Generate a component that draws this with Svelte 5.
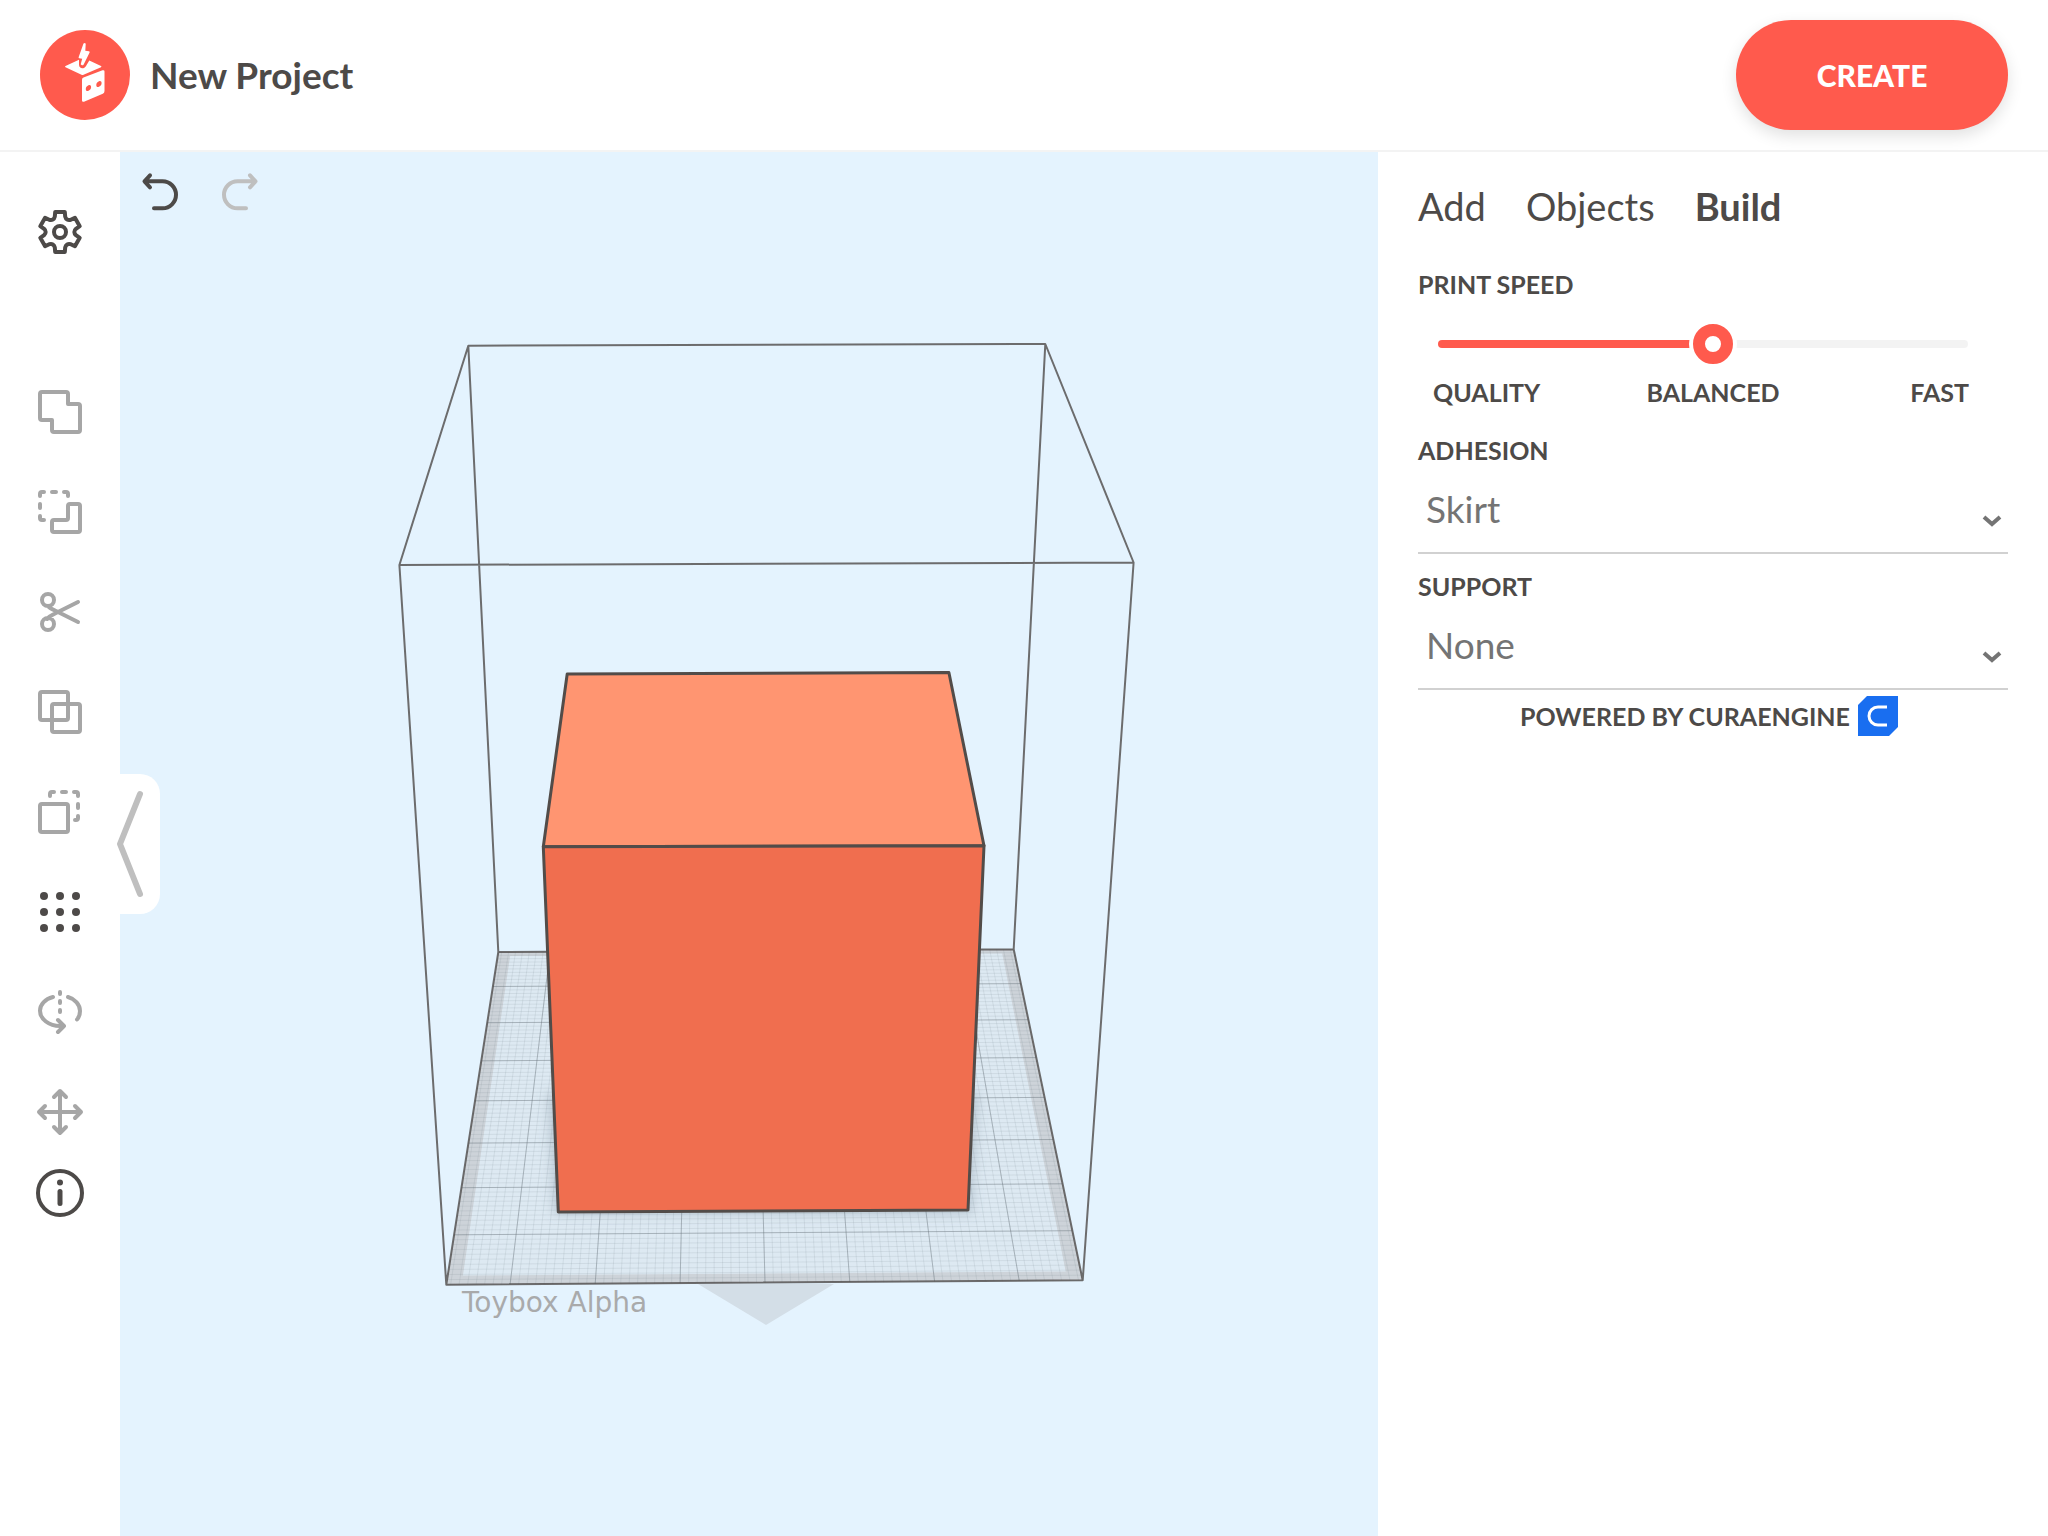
<script>
  let speed = $state(52);
  let adhesion = $state('Skirt');
  let support = $state('None');
  let project = $state('New Project');

  const tools = [
    { name: 'Union', d: 'M6 4H30a2 2 0 0 1 2 2V16H42a2 2 0 0 1 2 2V42a2 2 0 0 1-2 2H18a2 2 0 0 1-2-2V32H6a2 2 0 0 1-2-2V6a2 2 0 0 1 2-2Z' },
    { name: 'Subtract', d: 'M34 16h8a2 2 0 0 1 2 2v24a2 2 0 0 1-2 2H18a2 2 0 0 1-2-2v-8a2 2 0 0 1 2-2h12a2 2 0 0 0 2-2V18a2 2 0 0 1 2-2ZM4 8V6a2 2 0 0 1 2-2h2M16 4h4M28 4h2a2 2 0 0 1 2 2v2M4 16v4M4 28v2a2 2 0 0 0 2 2h2' },
    { name: 'Cut', d: 'M42 14 20 25q-8 4-9 6M42 34 20 23q-7-3-8-5M18 12a6 6 0 1 0-12 0a6 6 0 1 0 12 0M18 36a6 6 0 1 0-12 0a6 6 0 1 0 12 0' },
    { name: 'Intersect', d: 'M6 4h24a2 2 0 0 1 2 2v24a2 2 0 0 1-2 2H6a2 2 0 0 1-2-2V6a2 2 0 0 1 2-2ZM18 16h24a2 2 0 0 1 2 2v24a2 2 0 0 1-2 2H18a2 2 0 0 1-2-2V18a2 2 0 0 1 2-2Z' },
    { name: 'Duplicate', d: 'M6 16h24a2 2 0 0 1 2 2v24a2 2 0 0 1-2 2H6a2 2 0 0 1-2-2V18a2 2 0 0 1 2-2ZM14 8V6a2 2 0 0 1 2-2h2M26 4h4M38 4h2a2 2 0 0 1 2 2v2M42 16v4M42 28v2a2 2 0 0 1-2 2h-1' },
    { name: 'Grid', dots: true },
    { name: 'Mirror', d: 'M24 4v2M24 13v2M24 22v2M17 9C9 11 4 16.500 4 22.700C4 31 13 38 24 38h4M22 32l6 6-6 6M32 9c7 2 12 7.500 12 14q0 5-3 8.500' },
    { name: 'Move', d: 'M24 3v42M3 24h42M18 9l6-6 6 6M18 39l6 6 6-6M9 18l-6 6 6 6M39 18l6 6-6 6' }
  ];
  const dots = [8, 24, 40];

  // Gear outline: one tooth repeated every sixty degrees.
  const gear = Array.from({ length: 6 }, (_, i) => {
    const a = (i * Math.PI) / 3;
    const at = (x, y) =>
      `${(24 + x * Math.cos(a) - y * Math.sin(a)).toFixed(2)} ${(24 + x * Math.sin(a) + y * Math.cos(a)).toFixed(2)}`;
    return `${i ? 'L' : 'M'}${at(-5.2, -15.4)}L${at(-4.8, -20)}L${at(4.8, -20)}L${at(5.2, -15.4)}C${at(5.8, -12.6)} ${at(8, -11.3)} ${at(10.74, -12.2)}`;
  }).join('') + 'Z';

  // Build plate corners: back left, back right, front right, front left.
  const plate = [[378.3, 800], [893.7, 797.3], [962.7, 1128.3], [326.3, 1132.7]];

  function projector([p0, p1, p2, p3]) {
    const dx1 = p1[0] - p2[0], dx2 = p3[0] - p2[0], dx3 = p0[0] - p1[0] + p2[0] - p3[0];
    const dy1 = p1[1] - p2[1], dy2 = p3[1] - p2[1], dy3 = p0[1] - p1[1] + p2[1] - p3[1];
    const det = dx1 * dy2 - dx2 * dy1;
    const g = (dx3 * dy2 - dx2 * dy3) / det;
    const h = (dx1 * dy3 - dx3 * dy1) / det;
    const a = p1[0] - p0[0] + g * p1[0], b = p3[0] - p0[0] + h * p3[0];
    const d = p1[1] - p0[1] + g * p1[1], e = p3[1] - p0[1] + h * p3[1];
    return (u, v) => {
      const w = g * u + h * v + 1;
      return `${((a * u + b * v + p0[0]) / w).toFixed(1)} ${((d * u + e * v + p0[1]) / w).toFixed(1)}`;
    };
  }

  const at = projector(plate);
  const line = (u1, v1, u2, v2) => `M${at(u1, v1)}L${at(u2, v2)}`;
  const columns = 7.5;
  const rows = 8;
  let minor = '';
  let major = '';
  for (let i = 0; i <= 74; i++) {
    const u = (i + 0.5) / (columns * 10);
    minor += line(u, 0, u, 1);
  }
  for (let i = 1; i < 80; i++) minor += line(0, i / 80, 1, i / 80);
  for (let i = 0; i < 7; i++) {
    const u = (i + 0.75) / columns;
    major += line(u, 0, u, 1);
  }
  for (let i = 1; i < rows; i++) major += line(0, i / rows, 1, i / rows);
  const outer = `M${at(0, 0)}L${at(1, 0)}L${at(1, 1)}L${at(0, 1)}Z`;
  const inner = `M${at(0.024, 0.015)}L${at(0.976, 0.015)}L${at(0.976, 0.978)}L${at(0.024, 0.978)}Z`;
</script>

<div class="app">
  <header>
    <a class="logo" href="#home" aria-label="Toybox home">
      <svg viewBox="0 0 90 90">
        <circle cx="45" cy="45" r="45" fill="#ff5a4d" />
        <path fill="#fff" d="M25.500 36 39 29.700V34.500c0 4.500 5 5 7 1.500L49.300 30.500 61 36q1 .8 0 1.300L43.500 44.700q-1 .4-2 0L25.500 37.300q-1-.7 0-1.300Z" />
        <path fill="#fff" d="M43.500 13.500q1.800-1.400 2.200.5l-.4 6.800 3.700.4q1 .3.600 1.400L43.700 34.500q-1.500 1.800-3-.2L42.200 28.700 39.200 28.300q-.9-.3-.5-1.400Z" />
        <path fill="#fff" fill-rule="evenodd" d="M43.500 47.500 62.500 40.300q2-.6 2 1.300V61q0 2-1.700 2.800L44 71.700q-2 .6-2-1.300V49.700q0-1.600 1.500-2.200ZM48.500 55.200c-1.700.7-2.700 2-2.700 3.800s1 2.400 2.700 1.800 2.600-2 2.600-3.700-1-2.500-2.600-1.900ZM59 51.200c-1.700.7-2.700 2-2.700 3.800s1 2.400 2.700 1.800 2.600-2 2.600-3.700-1-2.500-2.600-1.900Z" />
      </svg>
    </a>
    <h1>{project}</h1>
    <button class="create">CREATE</button>
  </header>

  <main>
    <nav class="tools" aria-label="Tools">
      <button class="tool dark settings" aria-label="Settings">
        <svg viewBox="0 0 48 48"><path d={gear} /><circle cx="24" cy="24" r="6" /></svg>
      </button>
      {#each tools as tool}
        <button class="tool" class:dark={tool.dots} aria-label={tool.name}>
          <svg viewBox="0 0 48 48">
            {#if tool.dots}
              {#each dots as y}
                {#each dots as x}
                  <circle class="solid" cx={x} cy={y} r="4" />
                {/each}
              {/each}
            {:else}
              <path d={tool.d} />
            {/if}
          </svg>
        </button>
      {/each}
      <button class="tool dark info" aria-label="Info">
        <svg viewBox="0 0 48 48">
          <circle cx="24" cy="24" r="22" />
          <circle class="solid" cx="24" cy="13.500" r="3" />
          <path class="stem" d="M24 22.500v12" />
        </svg>
      </button>
    </nav>

    <section class="stage" aria-label="Workspace">
      <svg class="scene" viewBox="0 0 1258 1384">
        <defs>
          <filter id="soft" x="-20%" y="-20%" width="140%" height="140%"><feGaussianBlur stdDeviation="6" /></filter>
          <clipPath id="plate"><path d={outer} /></clipPath>
        </defs>
        <path d="M578 1132h136L646 1173Z" fill="#d3dee7" />
        <path d={outer} fill="#cdd3d9" />
        <path d={inner} fill="#dde9f2" />
        <path d={minor} stroke="#6b7b84" stroke-opacity=".13" fill="none" />
        <path d={major} stroke="#6b757c" stroke-opacity=".4" fill="none" />
        <g clip-path="url(#plate)">
          <path d="M428 940H858L852 1062H434Z" fill="#6f8290" fill-opacity=".32" filter="url(#soft)" />
        </g>
        <path class="frame" d="M348.300 193.700 925.300 192 1013.600 410.500 279.400 413ZM348.300 193.700 378.300 800 893.700 797.300 925.300 192M279.400 413 326.300 1132.700 962.700 1128.300 1013.600 410.500M378.300 800 326.300 1132.700M893.700 797.300 962.700 1128.300" />
        <path class="edge" d="M447.200 522 828.900 520.500 864 693.700 423.300 694.800Z" fill="#ff9571" />
        <path class="edge" d="M423.300 694.800 864 693.700 848 1058 438.300 1060Z" fill="#f06e4f" />
        <text x="342" y="1160">Toybox Alpha</text>
      </svg>

      <div class="history">
        <button class="tool dark" aria-label="Undo">
          <svg viewBox="0 0 48 48"><path d="M14 7.300 8.500 13.300l5.500 6M8.500 13.300H26.500a13.500 13.500 0 0 1 0 27H18" /></svg>
        </button>
        <button class="tool faint" aria-label="Redo">
          <svg viewBox="0 0 48 48"><path d="M34 7.300l5.500 6-5.500 6M39.500 13.300H21.500a13.500 13.500 0 0 0 0 27H30" /></svg>
        </button>
      </div>

      <button class="collapse" aria-label="Collapse tools">
        <svg viewBox="0 0 40 140"><path d="M20 20 0 70 20 120" /></svg>
      </button>
    </section>

    <aside>
      <div class="tabs" role="tablist">
        <button role="tab" aria-selected="false">Add</button>
        <button role="tab" aria-selected="false">Objects</button>
        <button role="tab" aria-selected="true">Build</button>
      </div>

      <label class="caption" for="speed">PRINT SPEED</label>
      <input id="speed" type="range" min="0" max="100" bind:value={speed} style="--value: {speed}%" />
      <div class="stops"><span>QUALITY</span><span>BALANCED</span><span>FAST</span></div>

      <label class="caption" for="adhesion">ADHESION</label>
      <div class="field">
        <select id="adhesion" bind:value={adhesion}>
          <option>Skirt</option><option>Brim</option><option>Raft</option>
        </select>
        <svg viewBox="0 0 20 14"><path d="M2 3 10 10 18 3" /></svg>
      </div>

      <label class="caption" for="support">SUPPORT</label>
      <div class="field">
        <select id="support" bind:value={support}>
          <option>None</option><option>Everywhere</option>
        </select>
        <svg viewBox="0 0 20 14"><path d="M2 3 10 10 18 3" /></svg>
      </div>

      <p class="powered">
        <span>POWERED BY CURAENGINE</span>
        <svg viewBox="0 0 40 40">
          <path d="M9 0H40V31L31 40H0V9Z" fill="#196ef0" />
          <path d="M29 11H20a9 9 0 0 0 0 18h9" fill="none" stroke="#fff" stroke-width="3" />
        </svg>
      </p>
    </aside>
  </main>
</div>

<style>
  :global(body) {
    margin: 0;
    background: #fff;
  }
  .app {
    display: flex;
    flex-direction: column;
    min-height: 100vh;
    font-family: Lato, sans-serif;
    color: #4d4a48;
  }
  button {
    padding: 0;
    border: 0;
    background: none;
    font: inherit;
    color: inherit;
    cursor: pointer;
  }
  header {
    display: flex;
    align-items: center;
    gap: 20px;
    padding: 20px 40px;
    border-bottom: 2px solid #f3f3f3;
  }
  .logo {
    display: block;
    width: 90px;
    height: 90px;
  }
  .logo svg {
    display: block;
  }
  h1 {
    flex: 1;
    margin: 0;
    font-size: 37px;
    line-height: 44px;
    font-weight: 700;
  }
  .create {
    width: 272px;
    height: 110px;
    border-radius: 55px;
    background: #ff5a4d;
    color: #fff;
    font-size: 30px;
    font-weight: 900;
    box-shadow: 0 6px 16px rgba(0, 0, 0, 0.12);
  }
  main {
    flex: 1;
    display: flex;
  }
  .tools {
    width: 120px;
    flex: none;
    display: flex;
    flex-direction: column;
    padding-top: 30px;
  }
  .tool {
    display: grid;
    place-items: center;
    height: 100px;
    color: #a6a6a6;
  }
  .tool svg {
    width: 48px;
    height: 48px;
    fill: none;
    stroke: currentColor;
    stroke-width: 4;
    stroke-linecap: round;
    stroke-linejoin: round;
  }
  .tool .solid {
    fill: currentColor;
    stroke: none;
  }
  .tool .stem {
    stroke-width: 5;
  }
  .dark {
    color: #4d4a48;
  }
  .faint {
    color: #bfbfbf;
  }
  .settings {
    margin-bottom: 80px;
  }
  .info {
    height: 62px;
  }
  .stage {
    flex: 1;
    min-width: 0;
    position: relative;
    display: flex;
    background: #e4f3fe;
  }
  .scene {
    width: 100%;
  }
  .frame {
    fill: none;
    stroke: #4d4a48;
    stroke-opacity: 0.8;
    stroke-width: 2;
    stroke-linejoin: round;
  }
  .edge {
    stroke: #524c49;
    stroke-width: 3;
    stroke-linejoin: round;
  }
  text {
    font-family: "DejaVu Sans", sans-serif;
    font-size: 28px;
    fill: #a9aaab;
  }
  .history {
    position: absolute;
    top: 16px;
    left: 16px;
    display: flex;
    gap: 32px;
  }
  .history .tool {
    width: 48px;
    height: 48px;
  }
  .collapse {
    position: absolute;
    left: 0;
    top: 50%;
    width: 40px;
    height: 140px;
    margin-top: -70px;
    border-radius: 0 20px 20px 0;
    background: #fff;
  }
  .collapse svg {
    display: block;
    overflow: visible;
    fill: none;
    stroke: #bfbfbf;
    stroke-width: 6;
    stroke-linecap: round;
    stroke-linejoin: round;
  }
  aside {
    width: 590px;
    flex: none;
    padding: 30px 40px;
    display: flex;
    flex-direction: column;
  }
  .tabs {
    display: flex;
    gap: 40px;
    margin-bottom: 28px;
    font-size: 38px;
    line-height: 48px;
  }
  .tabs [aria-selected="true"] {
    font-weight: 700;
  }
  .caption,
  .stops,
  .powered {
    font-size: 25px;
    line-height: 36px;
    font-weight: 700;
  }
  .caption {
    margin: 8px 0 2px;
  }
  input {
    appearance: none;
    height: 40px;
    margin: 20px 40px 10px 20px;
    background: none;
  }
  input::-webkit-slider-runnable-track {
    height: 8px;
    border-radius: 4px;
    background: linear-gradient(to right, #ff5a4d var(--value), #f3f3f3 var(--value));
  }
  input::-webkit-slider-thumb {
    appearance: none;
    width: 40px;
    height: 40px;
    margin-top: -16px;
    border: 12px solid #ff5a4d;
    border-radius: 50%;
    background: #fff;
    box-shadow: 0 0 0 4px #fff;
  }
  .stops {
    display: grid;
    grid-template-columns: 1fr auto 1fr;
    margin-bottom: 14px;
    padding: 0 15px;
  }
  .stops span:last-child {
    padding-right: 24px;
    text-align: right;
  }
  .field {
    display: grid;
    align-items: center;
    margin-bottom: 6px;
    border-bottom: 2px solid #d1d1d1;
  }
  select {
    grid-area: 1 / 1;
    appearance: none;
    height: 82px;
    padding: 0 8px 4px;
    border: 0;
    background: none;
    font: 37px/48px Lato, sans-serif;
    color: #747474;
  }
  .field svg {
    grid-area: 1 / 1;
    justify-self: end;
    width: 20px;
    height: 14px;
    margin: 20px 6px 0 0;
    fill: none;
    stroke: #747474;
    stroke-width: 4;
    pointer-events: none;
  }
  .powered {
    display: flex;
    align-items: center;
    justify-content: center;
    gap: 8px;
    margin: 0;
    padding-right: 8px;
  }
  .powered svg {
    width: 40px;
    height: 40px;
  }
</style>
